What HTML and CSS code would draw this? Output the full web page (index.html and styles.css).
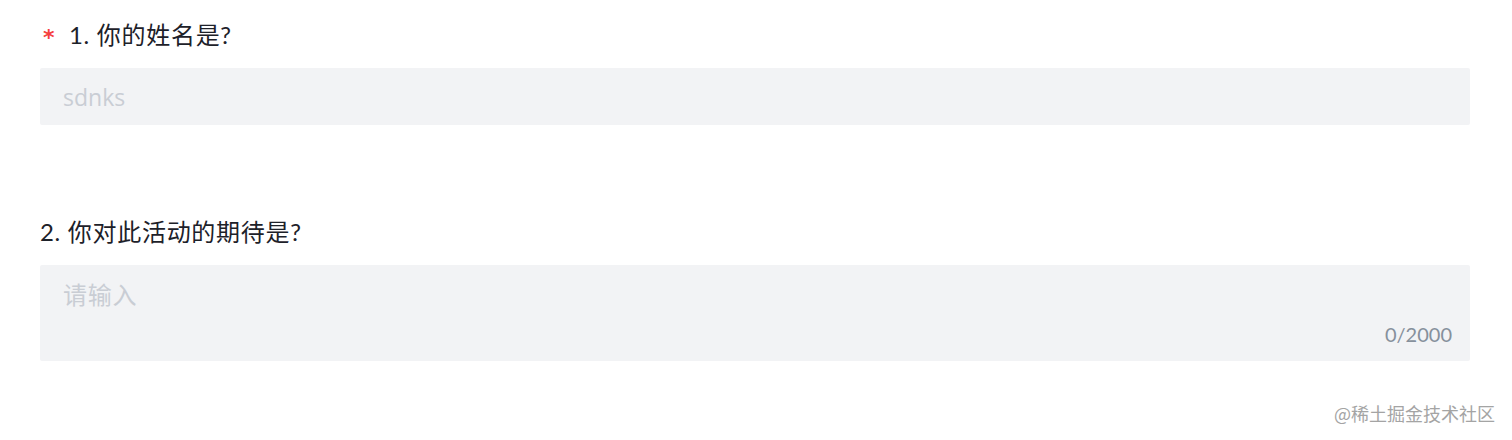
FILE: index.html
```html
<!DOCTYPE html>
<html lang="zh">
<head>
<meta charset="utf-8">
<title>问卷</title>
<link rel="stylesheet" href="styles.css">
</head>
<body>
<main class="form">
  <section class="question">
    <div class="label"><span class="required">*</span><span>1. 你的姓名是?</span></div>
    <div class="field">
      <input class="input" type="text" value="sdnks" disabled>
    </div>
  </section>
  <section class="question question-second">
    <div class="label"><span>2. 你对此活动的期待是?</span></div>
    <div class="field field-area">
      <textarea class="textarea" rows="1" placeholder="请输入"></textarea>
      <div class="counter">0/2000</div>
    </div>
  </section>
</main>
<div class="watermark">@稀土掘金技术社区</div>
</body>
</html>
```

FILE: styles.css
```css
html, body {
  margin: 0;
  padding: 0;
  background: #ffffff;
}
body {
  position: relative;
  width: 1512px;
  height: 440px;
  overflow: hidden;
  font-family: "Lato", "Noto Sans CJK SC", sans-serif;
  color: #1d2129;
}
.form {
  padding: 20px 42px 0 40px;
  display: flex;
  flex-direction: column;
}
.question {
  display: flex;
  flex-direction: column;
  gap: 18px;
}
.question-second {
  margin-top: 92px;
}
.label {
  display: flex;
  align-items: center;
  height: 30px;
  font-size: 24px;
  letter-spacing: 0.7px;
  line-height: 30px;
  color: #1d2129;
  font-family: "Lato", "Noto Sans CJK SC", sans-serif;
}
.required {
  color: #f53f3f;
  font-family: "DejaVu Sans", sans-serif;
  font-weight: 700;
  font-size: 22px;
  width: 29px;
  padding-left: 3px;
  box-sizing: border-box;
  margin-top: 6px;
  letter-spacing: 0;
}
.field {
  background: #f2f3f5;
  border-radius: 2px;
  height: 57px;
  display: flex;
  align-items: center;
  padding: 0 22px 0 23px;
  box-sizing: border-box;
}
.input {
  flex: 1;
  border: 0;
  outline: none;
  background: transparent;
  font-family: "Open Sans", "Noto Sans CJK SC", sans-serif;
  font-size: 23px;
  line-height: 30px;
  color: #c9cdd4;
  padding: 0;
  margin: 0;
  -webkit-text-fill-color: #c9cdd4;
}
.field-area {
  height: 96px;
  flex-direction: column;
  align-items: stretch;
  padding: 15px 18px 15px 23px;
  gap: 12px;
}
.textarea {
  display: block;
  height: 30px;
  border: 0;
  outline: none;
  resize: none;
  background: transparent;
  font-family: "Lato", "Noto Sans CJK SC", sans-serif;
  font-size: 24px;
  letter-spacing: 0.7px;
  line-height: 30px;
  padding: 0;
  margin: 0;
  overflow: hidden;
  color: #1d2129;
}
.textarea::placeholder {
  color: #c9cdd4;
}
.counter {
  text-align: right;
  font-size: 20px;
  line-height: 24px;
  color: #86909c;
  font-family: "Lato", sans-serif;
}
.watermark {
  position: absolute;
  right: 17px;
  top: 401px;
  font-size: 18px;
  line-height: 24px;
  color: #a4a4a4;
  font-family: "Noto Sans CJK SC", sans-serif;
}
```
